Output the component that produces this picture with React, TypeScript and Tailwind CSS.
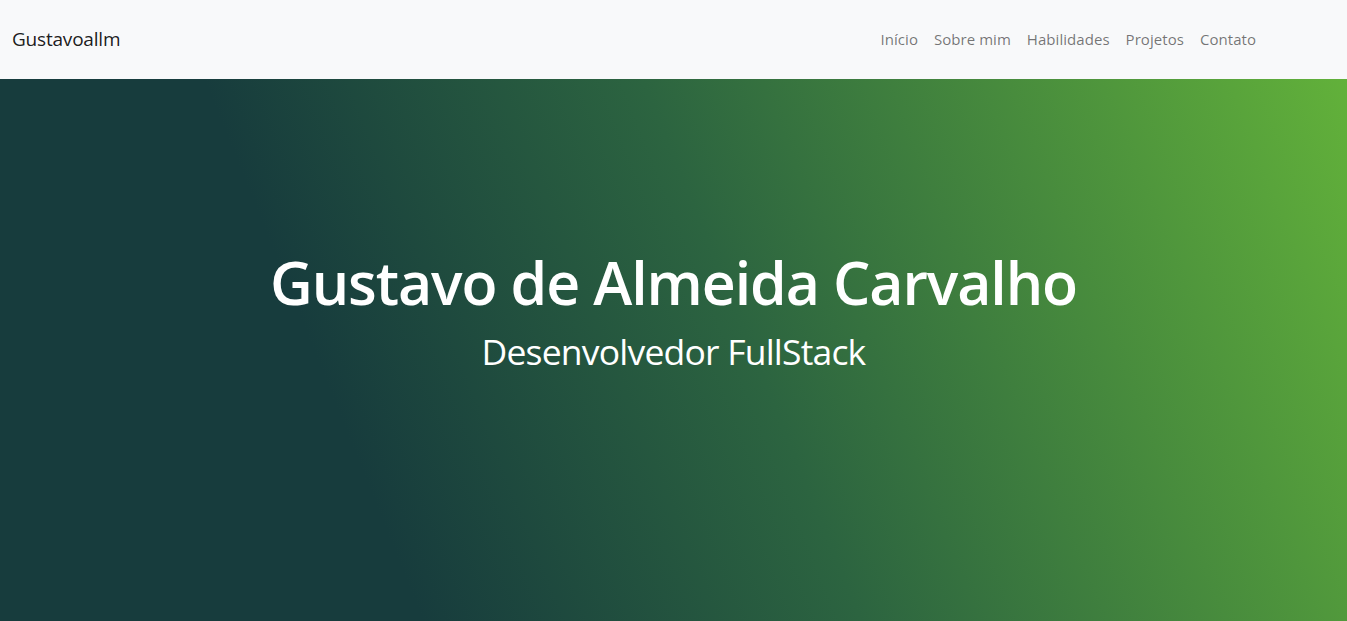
const links = ["Início", "Sobre mim", "Habilidades", "Projetos", "Contato"];

export default function App() {
  return (
    <div className="min-h-screen font-['Open_Sans',sans-serif]">
      <nav className="h-[79px] bg-[#f8f9fa] flex items-center justify-between px-3">
        <a className="text-[19px] text-[rgba(0,0,0,0.9)] tracking-[-0.2px]">Gustavoallm</a>
        <ul className="flex mr-[71px]">
          {links.map((l) => (
            <li key={l}>
              <a className="block px-2 text-[15px] text-[rgba(0,0,0,0.55)] tracking-[0.05px]">{l}</a>
            </li>
          ))}
        </ul>
      </nav>
      <section className="h-[542px] flex flex-col items-center justify-center pb-[80px] text-white bg-[linear-gradient(68deg,#173c3d_27%,#2c6440_55%,#62b13a_100%)]">
        <h1 className="text-[59px] font-semibold leading-tight tracking-[-1.1px]">Gustavo de Almeida Carvalho</h1>
        <p className="text-[35.5px] leading-tight mt-[9px] tracking-[-0.8px]">Desenvolvedor FullStack</p>
      </section>
    </div>
  );
}
